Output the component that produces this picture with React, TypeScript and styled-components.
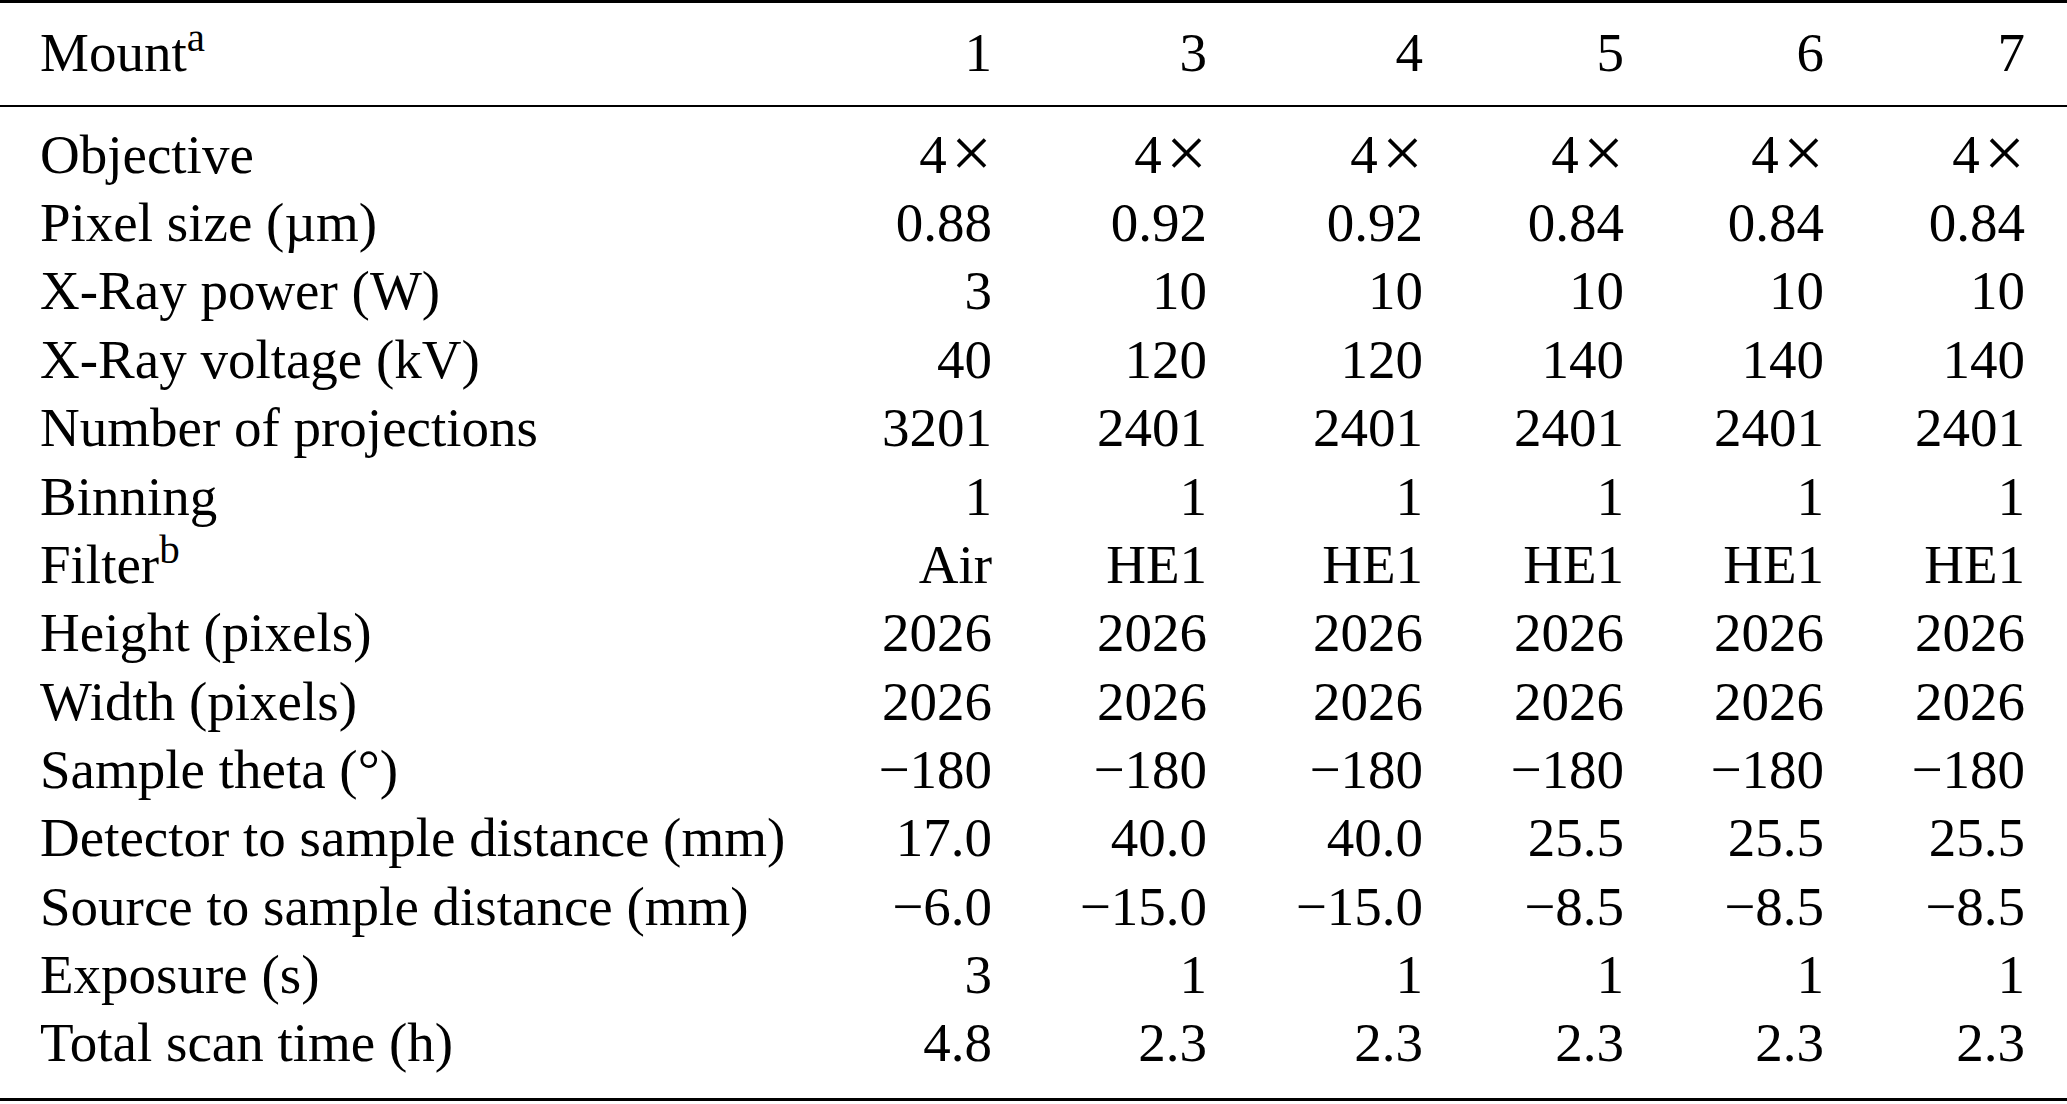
import React from "react";
import styled, { createGlobalStyle } from "styled-components";

const Global = createGlobalStyle`
  html, body {
    margin: 0;
    padding: 0;
    background: #ffffff;
  }
  body {
    font-family: "Liberation Serif", "Times New Roman", serif;
    color: #000000;
  }
`;

const COLS = "830px 122px 215px 216px 201px 200px 201px";

const Table = styled.div`
  width: 2067px;
  box-sizing: border-box;
  border-top: 3px solid #000;
  border-bottom: 3px solid #000;
  font-family: "Liberation Serif", "Times New Roman", serif;
  font-size: 55px;
  color: #000;
`;

const HeadRow = styled.div`
  display: grid;
  grid-template-columns: ${COLS};
  padding: 0 42px 4px 40px;
  height: 104px;
  box-sizing: border-box;
  line-height: 100px;
  border-bottom: 2px solid #000;
`;

const Body = styled.div`
  padding: 13.8px 0 20.3px;
`;

const Row = styled.div`
  display: grid;
  grid-template-columns: ${COLS};
  padding: 0 42px 0 40px;
  height: 68.35px;
  line-height: 68.35px;
`;

const Cell = styled.div<{ $num?: boolean }>`
  text-align: ${(p) => (p.$num ? "right" : "left")};
  white-space: nowrap;
`;

const Sup = styled.sup`
  font-size: 41px;
  line-height: 0;
  vertical-align: 0.5em;
`;

const Times = styled.span`
  font-size: 1.32em;
  line-height: 0;
  vertical-align: -0.06em;
  margin-left: 0.06em;
`;

const mountCols = ["1", "3", "4", "5", "6", "7"];

type RowData = { label: React.ReactNode; values: React.ReactNode[] };

const rep = (first: React.ReactNode, rest: React.ReactNode) => [first, rest, rest, rest, rest, rest];

const fourX = (
  <>
    4<Times>×</Times>
  </>
);

const rows: RowData[] = [
  { label: "Objective", values: rep(fourX, fourX) },
  { label: "Pixel size (µm)", values: ["0.88", "0.92", "0.92", "0.84", "0.84", "0.84"] },
  { label: "X-Ray power (W)", values: rep("3", "10") },
  { label: "X-Ray voltage (kV)", values: ["40", "120", "120", "140", "140", "140"] },
  { label: "Number of projections", values: rep("3201", "2401") },
  { label: "Binning", values: rep("1", "1") },
  {
    label: (
      <>
        Filter<Sup>b</Sup>
      </>
    ),
    values: rep("Air", "HE1"),
  },
  { label: "Height (pixels)", values: rep("2026", "2026") },
  { label: "Width (pixels)", values: rep("2026", "2026") },
  { label: "Sample theta (°)", values: rep("−180", "−180") },
  { label: "Detector to sample distance (mm)", values: ["17.0", "40.0", "40.0", "25.5", "25.5", "25.5"] },
  { label: "Source to sample distance (mm)", values: ["−6.0", "−15.0", "−15.0", "−8.5", "−8.5", "−8.5"] },
  { label: "Exposure (s)", values: rep("3", "1") },
  { label: "Total scan time (h)", values: ["4.8", "2.3", "2.3", "2.3", "2.3", "2.3"] },
];

export default function App() {
  return (
    <>
      <Global />
      <Table>
        <HeadRow>
          <Cell>
            Mount<Sup>a</Sup>
          </Cell>
          {mountCols.map((c) => (
            <Cell $num key={c}>
              {c}
            </Cell>
          ))}
        </HeadRow>
        <Body>
          {rows.map((r, i) => (
            <Row key={i}>
              <Cell>{r.label}</Cell>
              {r.values.map((v, j) => (
                <Cell $num key={j}>
                  {v}
                </Cell>
              ))}
            </Row>
          ))}
        </Body>
      </Table>
    </>
  );
}
